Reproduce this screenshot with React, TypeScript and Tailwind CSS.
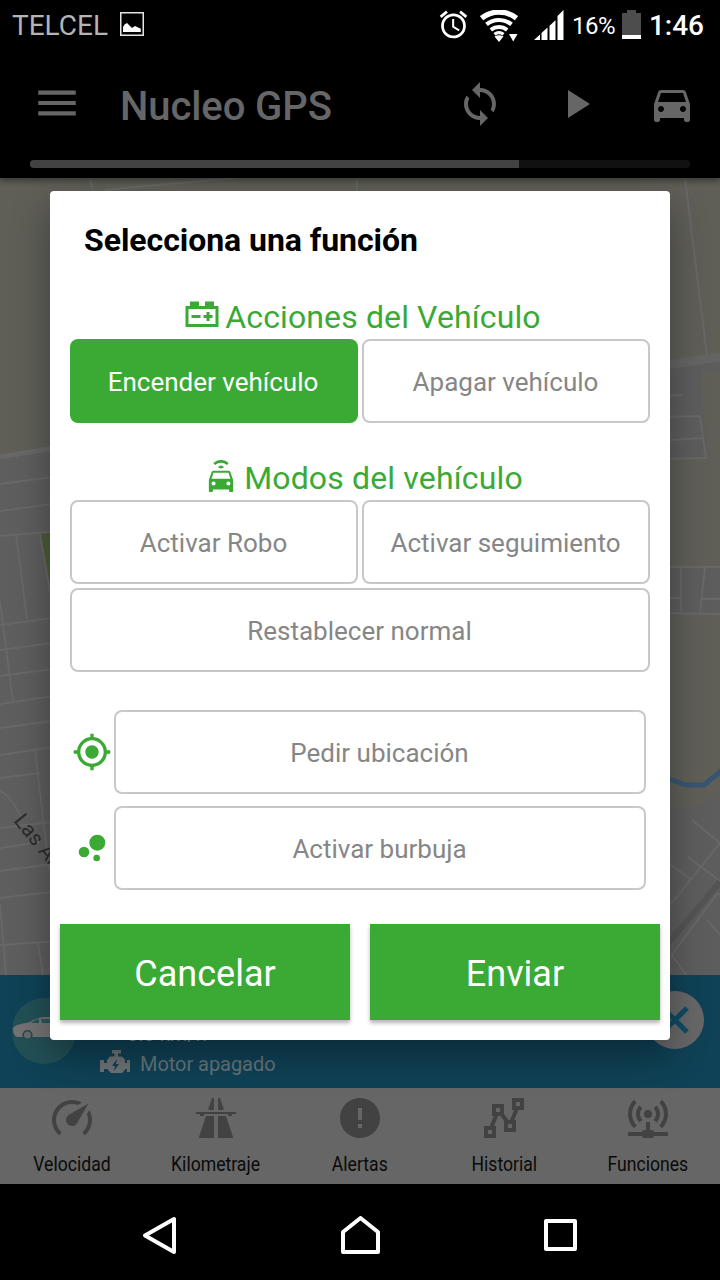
import React from 'react';
import {
    MdAlarm,
    MdBubbleChart,
    MdDirectionsCar,
    MdError,
    MdGpsFixed,
    MdMenu,
    MdPlayArrow,
    MdSync,
} from 'react-icons/md';

const tabs = [
    {
        label: 'Velocidad',
        path: 'M12,16A3,3 0 0,1 9,13C9,11.88 9.61,10.9 10.5,10.39L20.21,4.77L14.68,14.35C14.18,15.33 13.17,16 12,16M12,3C13.81,3 15.5,3.5 16.97,4.32L14.87,5.53C14,5.19 13,5 12,5A8,8 0 0,0 4,13C4,15.21 4.89,17.21 6.34,18.65H6.35C6.74,19.04 6.74,19.67 6.35,20.06C5.96,20.45 5.32,20.45 4.93,20.07V20.07C3.12,18.26 2,15.76 2,13A10,10 0 0,1 12,3M22,13C22,15.76 20.88,18.26 19.07,20.07V20.07C18.68,20.45 18.05,20.45 17.66,20.06C17.27,19.67 17.27,19.04 17.66,18.65V18.65C19.11,17.2 20,15.21 20,13C20,12 19.81,11 19.46,10.1L20.67,8C21.5,9.5 22,11.18 22,13Z',
    },
    {
        label: 'Kilometraje',
        path: 'M10,2L8,8H11V2H10M13,2V8H16L14,2H13M2,9V10H4V11H6V10H18L18.06,11H20V10H22V9H2M7,11L3.34,22H11V11H7M13,11V22H20.66L17,11H13Z',
    },
    { label: 'Alertas' },
    {
        label: 'Historial',
        path: 'M16,2V8H17.08L14.95,13H14.26L12,9.97V5H6V11H6.91L4.88,16H2V22H8V16H7.04L9.07,11H10.27L12,13.32V19H18V13H17.12L19.25,8H22V2M18,4H20V6H18M8,7H10V9H8M14,15H16V17H14M4,18H6V20H4',
    },
    {
        label: 'Funciones',
        path: 'M4.93,2.93C3.12,4.74 2,7.24 2,10C2,12.76 3.12,15.26 4.93,17.07L6.34,15.66C4.89,14.22 4,12.22 4,10C4,7.79 4.89,5.78 6.34,4.34L4.93,2.93M19.07,2.93L17.66,4.34C19.11,5.78 20,7.79 20,10C20,12.22 19.11,14.22 17.66,15.66L19.07,17.07C20.88,15.26 22,12.76 22,10C22,7.24 20.88,4.74 19.07,2.93M7.76,5.76C6.67,6.85 6,8.35 6,10C6,11.65 6.67,13.15 7.76,14.24L9.17,12.83C8.45,12.11 8,11.11 8,10C8,8.89 8.45,7.89 9.17,7.17L7.76,5.76M16.24,5.76L14.83,7.17C15.55,7.89 16,8.89 16,10C16,11.11 15.55,12.11 14.83,12.83L16.24,14.24C17.33,13.15 18,11.65 18,10C18,8.35 17.33,6.85 16.24,5.76M12,8A2,2 0 0,0 10,10A2,2 0 0,0 12,12A2,2 0 0,0 14,10A2,2 0 0,0 12,8M11,14V18H10A1,1 0 0,0 9,19H2V21H9A1,1 0 0,0 10,22H14A1,1 0 0,0 15,21H22V19H15A1,1 0 0,0 14,18H13V14H11Z',
    },
];

const StatusBar = () => (
    <div className="flex h-[50px] items-center bg-black pl-3 pr-4">
        <span className="pt-0.5 text-[28px] leading-none text-[#b4b4b4]">TELCEL</span>
        <svg className="ml-3 -mt-0.5" width="24" height="24" viewBox="0 0 24 24">
            <rect x="0.75" y="0.75" width="22.5" height="22.5" fill="none" stroke="#e4e4e4" strokeWidth="1.5" />
            <path d="M3 20v-5l1.5-2.500L7 11l5 5 3-2 5.800 2.800V20z" fill="#fff" />
        </svg>
        <div className="ml-auto flex items-center text-white">
            <MdAlarm className="-mt-0.5" size={33} />
            <svg className="ml-[10px] mt-0.5" width="38" height="32" viewBox="0 0 38 32">
                <g fill="none" stroke="#fff">
                    <path d="M1.5 8.2a28 28 0 0 1 35 0" strokeWidth="5.2" />
                    <path d="M6.5 14.4a20 20 0 0 1 25 0" strokeWidth="4.2" />
                    <path d="M10.8 19.8a13.5 13.5 0 0 1 16.4 0" strokeWidth="4" />
                    <path d="M14.4 24.3a8 8 0 0 1 9.2 0" strokeWidth="3.2" />
                </g>
                <path d="M14.5 26.5q4.5-2.4 9 0L19 32z" fill="#fff" />
                <path d="M27.5 22.5H38L33.5 32z" fill="#000" />
                <path d="M29 24h8.5L33.2 31.5z" fill="#fff" />
            </svg>
            <svg className="ml-4" width="30" height="30" viewBox="0 0 30 30" fill="#fff">
                <path d="M0 30l6-5.500V30zM7.500 30v-7l6-5.500V30zM15.500 30V15.800l6-5.500V30zM23.500 30V6l6-6v30z" />
            </svg>
            <span className="ml-2 pt-px text-[24px] leading-none tracking-[-0.6px]">16%</span>
            <svg className="ml-[7px] -mt-0.5" width="19" height="29" viewBox="0 0 19 29">
                <path d="M5 0h9v3h5v26H0V3h5z" fill="#4d4d4d" />
                <path d="M0 25h19v4H0z" fill="#fff" />
            </svg>
            <span className="ml-2 pt-0.5 text-[28px] font-medium leading-none">1:46</span>
        </div>
    </div>
);

const AppBar = () => (
    <header className="relative z-10 h-32 bg-black px-[30px] pt-[30px] text-[#666] shadow-[0_3px_6px_rgba(0,0,0,0.4)]">
        <div className="flex h-12 items-center">
            <MdMenu className="-mt-0.5 ml-0.5" size={50} />
            <h1 className="ml-[38px] pt-[5px] text-[40px] font-medium leading-none tracking-[-0.1px]">Nucleo GPS</h1>
            <MdSync className="ml-auto" size={48} />
            <MdPlayArrow className="ml-12" size={48} />
            <MdDirectionsCar className="-mr-1.5 ml-12" size={48} />
        </div>
        <div className="mt-8 h-2 overflow-hidden rounded-full bg-[#111]">
            <div className="h-full w-[489px] bg-[#424242]" />
        </div>
    </header>
);

const MapView = () => (
    <svg className="block h-[797px] w-[720px]" viewBox="0 178 720 797">
        <rect y="178" width="720" height="797" fill="#5f5f58" />
        <path d="M0 457L60 447V975H0z" fill="#5e5e5f" />
        <path d="M40 534L60 532V630z" fill="#4c5c38" />
        <path d="M660 364L720 357V372L701 373 706 459 660 459zM660 567H720V614H660zM660 805Q700 815 720 790V975H660z" fill="#5d5d5e" />
        <g fill="none" stroke="#686868" strokeWidth="1.8">
            <path d="M0 457L60 447" strokeWidth="5" />
            <path d="M0 484L60 476M0 511L60 503M0 536L60 531M0 625L60 617M0 650L60 642M0 676L60 668M0 704L60 695M0 728L60 720M0 755L60 746M0 778L40 773M0 828L60 821M0 848L40 842M0 871L60 863M0 898L60 891M0 945L60 941" />
            <path d="M16 534L27 619M40 534L50 592M0 601L13 702M35 750L49 870M0 791Q12 797 22 819M0 904L6 975M38 943L43 975" />
            <path d="M90 178l3 13M235 178q-70 6-130 12M357 178v13M685 178L707 356" />
            <path d="M660 366L720 357" strokeWidth="9" stroke="#646464" />
            <path d="M660 396L682 395M660 417L700 416L706 458L660 459M660 441L702 438" />
            <path d="M660 567H720M660 613L720 614M681 567V612M705 567L700 613M660 598H680M701 599H720" />
            <path d="M692 820L720 843M671 904L720 843M660 857L692 880M688 857L720 881M671 956L717 894H720M707 920L720 935M672 955L686 975" />
        </g>
        <path d="M660 953L720 882" stroke="#545455" strokeWidth="6" />
        <path d="M660 775L672 780 686 785H704L722 770" fill="none" stroke="#375572" strokeWidth="5" />
        <text transform="translate(13 821) rotate(51)" fill="#2b2b2b" fontSize="21" fontFamily="Roboto, sans-serif">
            Las Américas
        </text>
    </svg>
);

const InfoBar = () => (
    <div className="relative flex h-[113px] bg-[#0f4256] pl-3 pt-[23px] text-[20px] leading-none text-[#66767c]">
        <div className="flex h-[66px] w-16 items-center rounded-full bg-[#225056]">
            <svg className="ml-px mb-1.5" width="62" height="26" viewBox="0 0 62 26">
                <path d="M0 13Q2 9 16 7.500 24 2 33 2H41Q48 3 53 8L60 10 61 17 57 22H4Q0 21 0 13z" fill="#757273" />
                <path d="M17.500 8L23 4.500 26 4V8zM28 4H39L44 8H29z" fill="#2b565c" />
                <circle cx="14.500" cy="20" r="4.300" fill="#686b6c" stroke="#24484f" strokeWidth="1.600" />
                <circle cx="48" cy="20" r="4.300" fill="#686b6c" stroke="#24484f" strokeWidth="1.600" />
            </svg>
        </div>
        <div className="ml-6 flex flex-col pt-[26px]">
            <div className="flex h-5 items-center pl-[27px] text-[#7b898e]">0.0 km/h</div>
            <div className="mt-2 flex h-6 items-center gap-[9px]">
                <svg className="mb-1" width="31" height="24" viewBox="0 0 31 24" fill="#707476">
                    <path d="M12 0h9v3.500h-3v3h4l3 3v3.500h2v-3h3v12h-3v-3h-2v1l-3 3H11l-3-3v-1H4v3H0V10h4v3h3v-3l3-3.500h4.500v-3H12z" />
                    <path d="M17 9l-5 7h3l-1 5 5-7h-3z" fill="#0f4256" />
                </svg>
                <span className="tracking-[-0.05px]">Motor apagado</span>
            </div>
        </div>
        <div className="absolute left-[646px] top-4 flex h-[58px] w-[58px] items-center justify-center rounded-full bg-[#676768]">
            <svg width="28" height="28" viewBox="0 0 28 28" stroke="#0f4b63" strokeWidth="5">
                <path d="M2 2L26 26M26 2L2 26" />
            </svg>
        </div>
    </div>
);

const TabBar = () => (
    <nav className="grid h-24 grid-cols-5 bg-[#666]">
        {tabs.map((tab) => (
            <div key={tab.label} className="flex flex-col items-center pt-1.5">
                {tab.path ? (
                    <svg width="48" height="48" viewBox="0 0 24 24" fill="#424242">
                        <path d={tab.path} />
                    </svg>
                ) : (
                    <MdError size={48} color="#424242" />
                )}
                <span className="mt-3 scale-x-[0.88] text-[20px] leading-5 text-[#0a0a0a]">{tab.label}</span>
            </div>
        ))}
    </nav>
);

const SystemNav = () => (
    <div className="flex h-24 items-center justify-between bg-black px-[140px] pt-[7px]">
        <svg width="40" height="40" viewBox="0 0 40 40" fill="none" stroke="#fff" strokeWidth="4" strokeLinejoin="round">
            <path d="M5 19.5L34 3V36z" />
        </svg>
        <svg width="40" height="40" viewBox="0 0 40 40" fill="none" stroke="#fff" strokeWidth="4" strokeLinejoin="round">
            <path d="M3 36V16L20.5 2 38 16V36z" />
        </svg>
        <svg width="40" height="40" viewBox="0 0 40 40" fill="none" stroke="#fff" strokeWidth="4" strokeLinejoin="round">
            <path d="M6 5H35V33H6z" />
        </svg>
    </div>
);

const OptionButton = ({ label, active }: { label: string; active?: boolean }) => (
    <button
        className={
            active
                ? 'h-[84px] w-full rounded-lg bg-[#3aaa35] pr-0.5 pt-0.5 text-[26px] text-white'
                : 'h-[84px] w-full rounded-lg border-2 border-[#c8c8c8] bg-white pr-px pt-0.5 text-[26px] text-[#868686]'
        }
    >
        {label}
    </button>
);

const FunctionDialog = () => (
    <div className="absolute left-[50px] top-[191px] z-20 h-[849px] w-[620px] rounded bg-white px-5 pt-[29px] text-[#3aaa35] shadow-[0_16px_36px_rgba(0,0,0,0.35)]">
        <h2 className="pl-3.5 text-[32px] font-bold leading-10 tracking-[-0.05px] text-black">Selecciona una función</h2>

        <div className="mt-10 flex h-[39px] items-start justify-center pl-[5px]">
            <svg width="36" height="36" viewBox="0 0 24 24" fill="currentColor" className="-mt-[3px]">
                <path d="M4,3V6H1V20H23V6H20V3H14V6H10V3H4M3,8H21V18H3V8M15,10V12H13V14H15V16H17V14H19V12H17V10H15M5,12V14H11V12H5Z" />
            </svg>
            <span className="ml-[5px] text-[32px] leading-[34px] tracking-[0.12px]">Acciones del Vehículo</span>
        </div>
        <div className="grid grid-cols-2 gap-1">
            <OptionButton label="Encender vehículo" active />
            <OptionButton label="Apagar vehículo" />
        </div>

        <div className="mt-[37px] flex h-10 items-start justify-center pl-[11px]">
            <svg width="26" height="32" viewBox="0 0 26 32" fill="currentColor">
                <path
                    transform="translate(-3.2 3.9) scale(1.35)"
                    d="M18.92 6.01C18.72 5.42 18.16 5 17.5 5h-11c-.66 0-1.21.42-1.42 1.01L3 12v8c0 .55.45 1 1 1h1c.55 0 1-.45 1-1v-1h12v1c0 .55.45 1 1 1h1c.55 0 1-.45 1-1v-8l-2.08-5.99zM6.5 16c-.83 0-1.5-.67-1.5-1.5S5.67 13 6.5 13s1.5.67 1.5 1.5S7.33 16 6.5 16zm11 0c-.83 0-1.5-.67-1.5-1.5s.67-1.5 1.5-1.5 1.5.67 1.5 1.5-.67 1.5-1.5 1.5zM5 11l1.5-4.5h11L19 11H5z"
                />
                <path d="M6.2 4Q13-1.2 19.8 4" fill="none" stroke="currentColor" strokeWidth="2.8" />
                <path d="M9.8 7.2Q13 4 16.2 7.2L13 8.6z" />
            </svg>
            <span className="ml-2.5 text-[32px] leading-9 tracking-[0.15px]">Modos del vehículo</span>
        </div>
        <div className="grid grid-cols-2 gap-1">
            <OptionButton label="Activar Robo" />
            <OptionButton label="Activar seguimiento" />
        </div>
        <div className="mt-1">
            <OptionButton label="Restablecer normal" />
        </div>

        <div className="mt-[38px] flex flex-col gap-3 pl-0.5 pr-1">
            <div className="flex items-center gap-0.5">
                <MdGpsFixed className="shrink-0" size={40} />
                <OptionButton label="Pedir ubicación" />
            </div>
            <div className="flex items-center gap-0.5">
                <MdBubbleChart className="shrink-0" size={40} />
                <OptionButton label="Activar burbuja" />
            </div>
        </div>

        <div className="-mx-2.5 mt-[34px] flex gap-5 text-[36px] text-white">
            <button className="h-24 flex-1 bg-[#3aaa35] pt-1 shadow-[0_3px_4px_rgba(0,0,0,0.3)]">Cancelar</button>
            <button className="h-24 flex-1 bg-[#3aaa35] pt-1 shadow-[0_3px_4px_rgba(0,0,0,0.3)]">Enviar</button>
        </div>
    </div>
);

const App = () => {
    return (
        <div className="relative h-[1280px] w-[720px] overflow-hidden bg-black font-['Roboto',sans-serif]">
            <StatusBar />
            <AppBar />
            <MapView />
            <InfoBar />
            <TabBar />
            <SystemNav />
            <FunctionDialog />
        </div>
    );
};

export default App;
